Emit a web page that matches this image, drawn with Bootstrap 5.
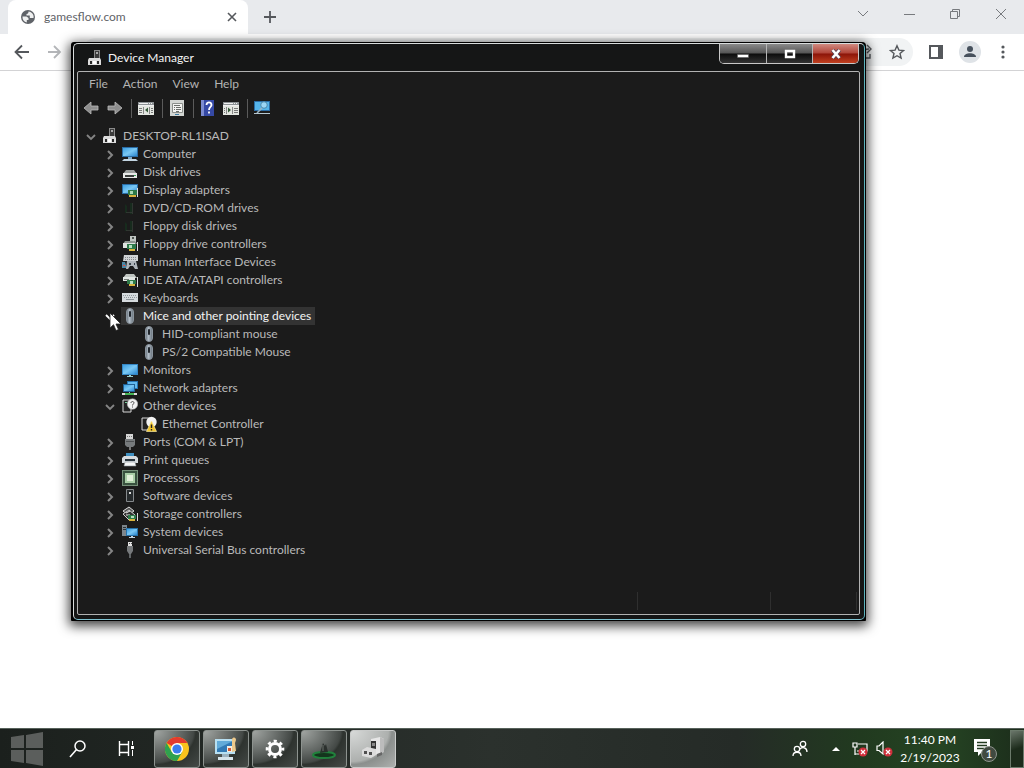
<!DOCTYPE html>
<html lang="en">
<head>
<meta charset="utf-8">
<meta name="viewport" content="width=device-width, initial-scale=1">
<title>Device Manager</title>
<link rel="stylesheet" href="https://cdn.jsdelivr.net/npm/bootstrap@5.3.0/dist/css/bootstrap.min.css">
<style>
body{font-family:Lato,"Open Sans",sans-serif;font-size:12px;line-height:18px;background:#fff}
svg{display:block;flex:none}
button{background:none;border:0;padding:0;color:inherit}
/* browser behind */
.tabstrip{height:34px;background:#e8eaed;padding-left:8px}
.tab{width:240px;background:#fff;border-radius:8px 8px 0 0;color:#5f6368;padding:0 11px 0 12px}
.toolbar-row{height:37px;border-bottom:1px solid #d3d3d5;color:#55585c;padding:0 13px 0 12px}
.omni{height:28px;border-radius:14px;background:#f1f3f4;padding-right:8px;margin:0 16px 0 20px}
.omni input{background:none;border:0;min-width:0;outline:0}
.avatar{width:22px;height:22px;border-radius:50%;background:#dfe3e7;overflow:hidden}
.caption-btns{color:#777a7e;gap:30px;padding-right:17px;padding-bottom:6px}
/* device manager */
.devmgr{left:71px;right:158px;top:42px;bottom:147px;background:#000;border-radius:3px 4px 1px 1px;padding:1px 1px 1px 2px;color:#b9b9b9;box-shadow:0 3px 12px 2px rgba(0,0,0,.75)}
.frame-line{border:1px solid #d8dcdc;border-right-color:#5cb3bd;border-bottom-color:#7fc4d2;border-radius:5px;background:#151616;padding:0 4px 4px 3px}
.titlebar{height:27px;color:#f4f4f4;padding-left:10px}
.title-gap{margin-left:5px}
.client{border:1px solid #b2b2b2;border-radius:2px;background:#1b1b1b}
.winbtns{height:20px;border:1px solid #c8c8c8;border-top:0;border-radius:0 0 5px 5px;overflow:hidden;margin-right:1px}
.winbtns button{width:46px;background:linear-gradient(#8a8a8a,#555 48%,#0c0c0c 52%,#333);display:flex;align-items:center;justify-content:center}
.winbtns button+button{border-left:1px solid #b5b5b5}
.winbtns .shut{background:linear-gradient(#d18a80,#b04438 48%,#8b1408 52%,#c04020)}
.menus{padding:3px 11px 0;gap:15px}
.menus a{color:#b4b4b4;text-decoration:none}
.tools{height:30px;padding-left:5px}
.sep{width:1px;height:19px;background:#5b5b5b;margin:0 6px 0 8px}
.tree{padding:4px 0 0 7px}
.tree ul{padding-left:19px}
.tree .node{height:18px}
.twist{width:12px;height:18px;margin-right:5px;color:#858585;display:flex;align-items:center;justify-content:center;padding-top:1px}
.tree .leaf{padding-left:17px}
.node-label{padding:0 4px 0 1px;height:18px;line-height:18px;white-space:nowrap}
.node-label svg{margin:1px 5px 0 0}
.root-label svg{margin-right:5px}
.picked{background:#333;color:#f4f4f4}
.status{height:22px;padding-right:2px}
.status div{border-right:1px solid #2f2f2f;height:18px}
.pane-b{width:133px}.pane-c{width:86px}
.cursor{left:109px;top:312px}
/* taskbar */
.taskbar{height:40px;background:linear-gradient(90deg,#1b201d,#2b312d 48%,#252b27 72%,#213a1f 84%,#254423 92%,#1c2d1b);border-top:1px solid #56615a;color:#fff}
.apps{gap:3px;padding-left:2px}
.app{width:46px;height:38px;border:1px solid #8d938f;border-radius:3px;background:radial-gradient(ellipse at 0 0,#a2a6a3 0,#5e6360 45%,#434845 62%,#2e332f 66%,#454a47);display:flex;align-items:center;justify-content:center}
.app.live{background:radial-gradient(ellipse at 0 0,#d8dad9 0,#adb0ae 60%,#8b8f8d 66%,#aeb1af);border-color:#c9cbca}
.peek{width:14px;height:38px;border:1px solid #6b7a6b;background:linear-gradient(160deg,#6a766a,#1c2b1b 50%)}
.when{width:56px}
.tray-gap{margin-left:12px}
</style>
</head>
<body class="vh-100 d-flex flex-column overflow-hidden position-relative">
<svg width="0" height="0" class="position-absolute" aria-hidden="true">
<defs>
<linearGradient id="blue" x1="0" y1="0" x2="1" y2="1"><stop offset="0" stop-color="#3c9fe2"/><stop offset=".5" stop-color="#7ac8f4"/><stop offset="1" stop-color="#2b87d0"/></linearGradient>
<linearGradient id="steel" x1="0" x2="1"><stop offset="0" stop-color="#5f6a74"/><stop offset=".4" stop-color="#b5c0ca"/><stop offset="1" stop-color="#667079"/></linearGradient>
<symbol id="i-open" viewBox="0 0 12 12"><path d="M2 4l4 4 4-4" fill="none" stroke="currentColor" stroke-width="1.8"/></symbol>
<symbol id="i-shut" viewBox="0 0 12 12"><path d="M4 2l4 4-4 4" fill="none" stroke="currentColor" stroke-width="2"/></symbol>
<symbol id="i-dev" viewBox="0 0 16 16"><path d="M7 0h6v9H7z" fill="#8a8a8a"/><path d="M8 1h4v8H8z" fill="#3c3c3c"/><path d="M9 2h2v2H9z" fill="#aaa"/><path d="M2 8h11l1 2v5H1v-5z" fill="#dcdcdc"/><path d="M3 11h2v3H3zM10 11h2v3h-2z" fill="#2a2a2a"/><path d="M6 11h3v3H6z" fill="#fff"/></symbol>
<symbol id="i-pc" viewBox="0 0 16 16"><path d="M0 1h16v10H0z" fill="#2a6ca5"/><path d="M1 2h14v8H1z" fill="url(#blue)"/><path d="M6 11h4v2H6z" fill="#7fa9c8"/><path d="M2 13h12l2 2H0z" fill="#c3d5e2"/></symbol>
<symbol id="i-disk" viewBox="0 0 16 16"><path d="M4 6h8l3 4H1z" fill="#9a9e9c"/><path d="M1 9h14v5H1z" fill="#e8eae8"/><path d="M3 11h9v2H3z" fill="#3a3e3c"/><path d="M12 11h2v1h-2z" fill="#3aa35c"/></symbol>
<symbol id="i-disp" viewBox="0 0 16 16"><path d="M0 2h16v10H0z" fill="#2a6ca5"/><path d="M1 3h14v8H1z" fill="url(#blue)"/><path d="M6 8h9v5H6z" fill="#2e7a49"/><path d="M8 9h3v3H8z" fill="#a9d8b4"/><path d="M7 13h7v2H7z" fill="#d7b33c"/><path d="M15 6h1v9h-1z" fill="#ddd"/></symbol>
<symbol id="i-dark" viewBox="0 0 16 16"><path d="M3 4l2 2v7H3zM8 3h2v11H8z" fill="#172b1d"/><path d="M4 12h7v1H4zM10 3h1v11h-1z" fill="#303631"/></symbol>
<symbol id="i-fctl" viewBox="0 0 16 16"><path d="M8 0h6v6H8z" fill="#c0c6c2"/><path d="M10 1h2v2h-2z" fill="#4f5551"/><path d="M3 5h10l2 3H1z" fill="#8c938e"/><path d="M1 7h12v5H1z" fill="#dfe3e0"/><path d="M5 8h9v5H5z" fill="#2e7a49"/><path d="M7 9h3v3H7z" fill="#b5dec0"/><path d="M7 13h6v2H7z" fill="#d7b33c"/><path d="M15 6h1v9h-1z" fill="#ddd"/></symbol>
<symbol id="i-hid" viewBox="0 0 16 16"><path d="M2 1h14v6H1z" fill="#d0d3d5"/><path d="M3 3.500h12M3 5.500h12" stroke="#868b8f" stroke-dasharray="1 1"/><path d="M0 8h3l2 6H0z" fill="#4d87a4"/><path d="M5 7h9l2 8h-3l-2-3H8l-2 3H4z" fill="#aeb4b9"/><path d="M7 9h2v2H7zM12 9h1v2h-1z" fill="#39424a"/><path d="M1 11h2v1H1z" fill="#e64b3c"/></symbol>
<symbol id="i-ide" viewBox="0 0 16 16"><path d="M4 2h8l3 4H1z" fill="#bfc4c0"/><path d="M1 5h12v4H1z" fill="#e2e6e3"/><path d="M2 7h5v1H2z" fill="#767d78"/><path d="M5 8h9v4H5z" fill="#2e7a49"/><path d="M8 9h3v3H8z" fill="#b5dec0"/><path d="M7 12h6v2H7z" fill="#d7b33c"/><path d="M15 5h1v10h-1z" fill="#ddd"/></symbol>
<symbol id="i-key" viewBox="0 0 16 16"><path d="M0 3h16v9H0z" fill="#d5dadd"/><path d="M1 5.500h14M2 7.500h13" stroke="#90989d" stroke-dasharray="1 1"/><path d="M4 9h8v1H4z" fill="#8b9398"/></symbol>
<symbol id="i-mouse" viewBox="0 0 16 16"><rect x="4.500" y=".5" width="7" height="15" rx="3.500" fill="url(#steel)" stroke="#8a949d"/><rect x="7" y="3" width="2" height="6" rx="1" fill="#20262c"/></symbol>
<symbol id="i-mon" viewBox="0 0 16 16"><path d="M0 2h16v11H0z" fill="#3687c4"/><path d="M1 3h14v9H1z" fill="url(#blue)"/><path d="M7 13h2v1h2v1H5v-1h2z" fill="#9cc"/></symbol>
<symbol id="i-net" viewBox="0 0 16 16"><path d="M5 1h11v8H5z" fill="#2674b2"/><path d="M6 2h9v6H6z" fill="#63b9ed"/><path d="M1 4h12v8H1z" fill="#215f92"/><path d="M2 5h10v6H2z" fill="url(#blue)"/><path d="M7 12h1v2H7z" fill="#bbb"/><path d="M0 13h15v2H0z" fill="#46b354"/><path d="M0 13h3v2H0zM12 13h3v2h-3z" fill="#ddd"/></symbol>
<symbol id="i-other" viewBox="0 0 16 16"><path d="M1 2h8v12H1z" fill="#222" stroke="#d7d7d7"/><path d="M3 4h2v1H3z" fill="#7c9"/><circle cx="10.500" cy="6" r="5.200" fill="#f2f2f2" stroke="#b5b5b5" stroke-width=".6"/><path d="M9 5c0-2 3-2 3 0 0 1-1.500 1-1.500 2.500M10.500 8.500v1" fill="none" stroke="#4b4b4b"/></symbol>
<symbol id="i-port" viewBox="0 0 16 16"><path d="M4 0h7v5H4z" fill="#d6d6d6"/><path d="M5 2.500h5" stroke="#777" stroke-dasharray="1 1"/><path d="M3 5h10v6l-2 2H5l-2-2z" fill="#777b7d"/><path d="M4 7.500h8" stroke="#4f5254"/><path d="M7 13h2v3H7z" fill="#777"/></symbol>
<symbol id="i-print" viewBox="0 0 16 16"><path d="M4 1h8v4H4z" fill="#3e8fc0"/><path d="M2 4h12l2 2v5H0V6z" fill="#d5dbdf"/><path d="M3 7h10v2H3z" fill="#27333b"/><path d="M3 10h10l1 4H2z" fill="#f5f7f8" stroke="#8b959b" stroke-width=".6"/></symbol>
<symbol id="i-cpu" viewBox="0 0 16 16"><path d="M0 0h16v16H0z" fill="#39523f"/><path d="M.5.5h15v15H.5z" fill="none" stroke="#b5ccb5" stroke-dasharray="1 1"/><path d="M3 3h10v10H3z" fill="#a9cda6"/><path d="M5 5h6v6H5z" fill="#e2f0da"/></symbol>
<symbol id="i-soft" viewBox="0 0 16 16"><path d="M4.500 1.500h7v12h-7z" fill="#262a2c" stroke="#85898c"/><path d="M7 4h2v2H7z" fill="#ddd"/></symbol>
<symbol id="i-stor" viewBox="0 0 16 16"><path d="M1 5l6-4 5 4-6 4z" fill="#555" stroke="#dadada"/><path d="M1 8l6-4 6 5-6 5z" fill="#333" stroke="#cfcfcf"/><path d="M4 7l4-2M4 9h4" stroke="#eee"/><path d="M6 9h8v4H6z" fill="#2e7a49"/><path d="M9 10h3v2H9z" fill="#b5dec0"/><path d="M7 13h6v2H7z" fill="#d7b33c"/><path d="M15 7h1v8h-1z" fill="#ddd"/></symbol>
<symbol id="i-sys" viewBox="0 0 16 16"><path d="M0 1h5v11H0z" fill="#7d868c"/><path d="M1 3h3v1H1zM1 5h3v1H1z" fill="#2b3338"/><path d="M4 4h12v8H4z" fill="#2772aa"/><path d="M5 5h10v6H5z" fill="url(#blue)"/><path d="M9 12h2v1h2v1H7v-1h2z" fill="#c3d5e2"/></symbol>
<symbol id="i-usb" viewBox="0 0 16 16"><path d="M6 0h4v4H6z" fill="#e3e3e3"/><path d="M7 1h1v1H7zM9 1h1v1H9z" fill="#555"/><path d="M5 4h6v5l-2 3H7L5 9z" fill="#76797b"/><path d="M7 12h2v4H7z" fill="#606466"/></symbol>
</defs>
</svg>

<header>
  <div class="tabstrip d-flex justify-content-between">
    <div class="d-flex">
      <div class="tab d-flex align-items-center">
        <svg width="16" height="16" viewBox="0 0 16 16"><circle cx="8" cy="8" r="7" fill="#5f6368"/><path d="M2.500 7.500h4l2 1.500v2H6.800v2.600C4 13 2.300 10.500 2.500 7.500zM8.500 2.500c0 1.500-.5 2.500-2 2.500v1.500h3.300V9h3.700c.8-3-1.500-6.200-5-6.500z" fill="#fff" opacity=".9"/></svg>
        <span class="ms-2 flex-grow-1">gamesflow.com</span>
        <button aria-label="Close tab"><svg width="10" height="10" viewBox="0 0 10 10"><path d="M1 1l8 8M9 1L1 9" stroke="#55585c" stroke-width="1.600"/></svg></button>
      </div>
      <button class="ms-3" aria-label="New tab"><svg width="12" height="12" viewBox="0 0 12 12"><path d="M6 0v12M0 6h12" stroke="#55585c" stroke-width="1.800"/></svg></button>
    </div>
    <div class="caption-btns d-flex align-items-center">
      <button class="me-1" aria-label="Search tabs"><svg width="12" height="12" viewBox="0 0 12 12"><path d="M1 3l5 5 5-5" fill="none" stroke="currentColor"/></svg></button>
      <button aria-label="Minimize browser"><svg width="12" height="12" viewBox="0 0 12 12"><path d="M1 6.500h11" stroke="currentColor"/></svg></button>
      <button class="ms-1" aria-label="Restore browser"><svg width="12" height="12" viewBox="0 0 12 12"><path d="M1.500 3.500h7v7h-7zM3.500 3V1.500h7v7H9" fill="none" stroke="currentColor"/></svg></button>
      <button class="ms-1" aria-label="Close browser"><svg width="12" height="12" viewBox="0 0 12 12"><path d="M1 1l10 10M11 1L1 11" stroke="currentColor"/></svg></button>
    </div>
  </div>
  <div class="toolbar-row d-flex align-items-center">
    <button aria-label="Back"><svg width="20" height="16" viewBox="0 0 20 16"><path d="M17 8H4M10 1.500L3.500 8l6.500 6.500" fill="none" stroke="currentColor" stroke-width="1.800"/></svg></button>
    <button class="ms-3" aria-label="Forward" disabled><svg width="14" height="16" viewBox="0 0 14 16"><path d="M0 8h12M6 2l6 6-6 6" fill="none" stroke="#b4b6b9" stroke-width="1.800"/></svg></button>
    <div class="omni d-flex align-items-center flex-grow-1">
      <input class="flex-grow-1" type="text" aria-label="Address">
      <button class="me-3" aria-label="Share"><svg width="16" height="16" viewBox="0 0 16 16"><path d="M5 6H2v8h11v-4M6 10c0-4 3-5 6-5M10 1l4 4-4 4" fill="none" stroke="currentColor" stroke-width="1.400"/></svg></button>
      <button aria-label="Bookmark"><svg width="16" height="16" viewBox="0 0 16 16"><path d="M8 1.800l1.900 4.300 4.600.4-3.500 3 1.100 4.600L8 11.700l-4.100 2.400L5 9.500l-3.500-3 4.600-.4z" fill="none" stroke="currentColor" stroke-width="1.400"/></svg></button>
    </div>
    <button aria-label="Side panel"><svg width="14" height="14" viewBox="0 0 14 14"><path d="M1 1h12v12H1z" fill="#fff" stroke="currentColor" stroke-width="2"/><path d="M9 1h4v12H9z" fill="currentColor"/></svg></button>
    <button class="avatar ms-3 me-3" aria-label="Profile"><svg width="22" height="22" viewBox="0 0 22 22"><circle cx="11" cy="8" r="3" fill="#47515d"/><path d="M5 16c0-5 12-5 12 0z" fill="#47515d"/></svg></button>
    <button aria-label="Menu"><svg width="14" height="16" viewBox="0 0 14 16"><g fill="currentColor"><circle cx="6" cy="3" r="1.600"/><circle cx="6" cy="8" r="1.600"/><circle cx="6" cy="13" r="1.600"/></g></svg></button>
  </div>
</header>
<main class="flex-grow-1"></main>

<section class="devmgr position-absolute d-flex" aria-label="Device Manager">
  <div class="frame-line flex-grow-1 d-flex flex-column">
    <div class="titlebar d-flex justify-content-between">
      <div class="d-flex align-items-center"><svg width="16" height="16"><use href="#i-dev"/></svg><span class="title-gap">Device Manager</span></div>
      <div class="winbtns d-flex">
        <button aria-label="Minimize"><svg width="12" height="10" viewBox="0 0 12 10"><path d="M.5 5.500h11v3H.5z" fill="#fff" stroke="#555" stroke-width=".5"/></svg></button>
        <button aria-label="Maximize"><svg width="12" height="10" viewBox="0 0 12 10"><path d="M2 2h8v6H2z" fill="none" stroke="#fff" stroke-width="2.400"/></svg></button>
        <button class="shut" aria-label="Close"><svg width="12" height="10" viewBox="0 0 12 10"><path d="M2.500 1l7 8M9.500 1l-7 8" stroke="#545" stroke-width="4"/><path d="M2.500 1l7 8M9.500 1l-7 8" stroke="#fff" stroke-width="2.600"/></svg></button>
      </div>
    </div>
    <div class="client flex-grow-1 d-flex flex-column">
      <nav class="menus d-flex"><a href="#">File</a><a href="#">Action</a><a href="#">View</a><a href="#">Help</a></nav>
      <div class="tools d-flex align-items-center">
        <button aria-label="Back"><svg width="16" height="14" viewBox="0 0 16 14"><path d="M1 7l7-6v4h7v4H8v4z" fill="#8e8e8e" stroke="#bdbdbd" stroke-width=".8"/></svg></button>
        <button class="ms-2" aria-label="Forward"><svg width="16" height="14" viewBox="0 0 16 14"><path d="M15 7L8 1v4H1v4h7v4z" fill="#8e8e8e" stroke="#bdbdbd" stroke-width=".8"/></svg></button>
        <span class="sep"></span>
        <button aria-label="Show console tree"><svg width="16" height="16" viewBox="0 0 16 16"><path d="M0 2h16v13H0z" fill="#e4e7e2"/><path d="M0 2h16v4H0z" fill="#8d9295"/><path d="M1 3h9v1H1zM11 3h1v1h-1zM13 3h1v1h-1zM0 5h16v1H0z" fill="#f0f0f0"/><path d="M5 7h1v7H5zM11 7h1v7h-1z" fill="#888"/><path d="M1 8.500h3M1 10.500h3M1 12.500h3M13 8.500h2M13 10.500h2M13 12.500h2" stroke="#777"/><path d="M10 7.500v5L7 10z" fill="#345a38"/></svg></button>
        <span class="sep"></span>
        <button aria-label="Properties"><svg width="16" height="16" viewBox="0 0 16 16"><path d="M1 0h14v16H1z" fill="#d3d6d3"/><path d="M3.500 3.500h10v9h-10z" fill="#f4f4f2" stroke="#8b8f8b"/><path d="M5 5.500h6M7 7.500h5M7 9.500h5M7 11.500h3M5 7.500h1M5 9.500h1" stroke="#6a6e6a"/><path d="M6 14h4v1H6z" fill="#3f7ba0"/></svg></button>
        <span class="sep"></span>
        <button aria-label="Help"><svg width="15" height="16" viewBox="0 0 15 16"><path d="M1 0h13v16H1z" fill="#3549a5"/><path d="M1 0h3v16H1z" fill="#7c8bd0"/><path d="M6.500 5c0-3.500 5-3.500 5 0 0 2-2.500 2-2.500 5M9 11.500v2" fill="none" stroke="#fff" stroke-width="1.800"/></svg></button>
        <button class="ms-2" aria-label="Show action pane"><svg width="16" height="16" viewBox="0 0 16 16"><path d="M0 2h16v13H0z" fill="#e4e7e2"/><path d="M0 2h16v4H0z" fill="#8d9295"/><path d="M1 3h9v1H1zM11 3h1v1h-1zM13 3h1v1h-1zM0 5h16v1H0z" fill="#f0f0f0"/><path d="M3 7h1v7H3zM9 7h1v7H9z" fill="#888"/><path d="M1 8.500h1M1 10.500h1M1 12.500h1M11 8.500h4M11 10.500h4M11 12.500h4" stroke="#777"/><path d="M5 7.500v5L8 10z" fill="#345a38"/></svg></button>
        <span class="sep"></span>
        <button aria-label="Scan for hardware changes"><svg width="16" height="16" viewBox="0 0 16 16"><path d="M0 1h16v10H0z" fill="#2a6ca5"/><path d="M1 2h14v8H1z" fill="#55b4ea"/><circle cx="10" cy="5" r="3.300" fill="#9bd5f4" stroke="#4b88ac"/><path d="M8 8l-5 5" stroke="#98b3c2" stroke-width="1.600"/><path d="M0 13h16v1H0z" fill="#b5c6d0"/></svg></button>
      </div>
      <div class="tree flex-grow-1">
        <div class="node d-flex align-items-center"><button class="twist" aria-label="Collapse"><svg width="12" height="12"><use href="#i-open"/></svg></button><span class="root-label d-flex align-items-center"><svg width="16" height="16"><use href="#i-dev"/></svg>DESKTOP-RL1ISAD</span></div>
        <ul class="list-unstyled mb-0">
          <li class="node d-flex"><button class="twist" aria-label="Expand"><svg width="12" height="12"><use href="#i-shut"/></svg></button><span class="node-label d-flex"><svg width="16" height="16"><use href="#i-pc"/></svg>Computer</span></li>
          <li class="node d-flex"><button class="twist" aria-label="Expand"><svg width="12" height="12"><use href="#i-shut"/></svg></button><span class="node-label d-flex"><svg width="16" height="16"><use href="#i-disk"/></svg>Disk drives</span></li>
          <li class="node d-flex"><button class="twist" aria-label="Expand"><svg width="12" height="12"><use href="#i-shut"/></svg></button><span class="node-label d-flex"><svg width="16" height="16"><use href="#i-disp"/></svg>Display adapters</span></li>
          <li class="node d-flex"><button class="twist" aria-label="Expand"><svg width="12" height="12"><use href="#i-shut"/></svg></button><span class="node-label d-flex"><svg width="16" height="16"><use href="#i-dark"/></svg>DVD/CD-ROM drives</span></li>
          <li class="node d-flex"><button class="twist" aria-label="Expand"><svg width="12" height="12"><use href="#i-shut"/></svg></button><span class="node-label d-flex"><svg width="16" height="16"><use href="#i-dark"/></svg>Floppy disk drives</span></li>
          <li class="node d-flex"><button class="twist" aria-label="Expand"><svg width="12" height="12"><use href="#i-shut"/></svg></button><span class="node-label d-flex"><svg width="16" height="16"><use href="#i-fctl"/></svg>Floppy drive controllers</span></li>
          <li class="node d-flex"><button class="twist" aria-label="Expand"><svg width="12" height="12"><use href="#i-shut"/></svg></button><span class="node-label d-flex"><svg width="16" height="16"><use href="#i-hid"/></svg>Human Interface Devices</span></li>
          <li class="node d-flex"><button class="twist" aria-label="Expand"><svg width="12" height="12"><use href="#i-shut"/></svg></button><span class="node-label d-flex"><svg width="16" height="16"><use href="#i-ide"/></svg>IDE ATA/ATAPI controllers</span></li>
          <li class="node d-flex"><button class="twist" aria-label="Expand"><svg width="12" height="12"><use href="#i-shut"/></svg></button><span class="node-label d-flex"><svg width="16" height="16"><use href="#i-key"/></svg>Keyboards</span></li>
          <li>
            <div class="node d-flex"><button class="twist text-white" aria-label="Collapse"><svg width="12" height="12"><use href="#i-open"/></svg></button><span class="node-label picked d-flex"><svg width="16" height="16"><use href="#i-mouse"/></svg>Mice and other pointing devices</span></div>
            <ul class="list-unstyled">
              <li class="node leaf d-flex"><span class="node-label d-flex"><svg width="16" height="16"><use href="#i-mouse"/></svg>HID-compliant mouse</span></li>
              <li class="node leaf d-flex"><span class="node-label d-flex"><svg width="16" height="16"><use href="#i-mouse"/></svg>PS/2 Compatible Mouse</span></li>
            </ul>
          </li>
          <li class="node d-flex"><button class="twist" aria-label="Expand"><svg width="12" height="12"><use href="#i-shut"/></svg></button><span class="node-label d-flex"><svg width="16" height="16"><use href="#i-mon"/></svg>Monitors</span></li>
          <li class="node d-flex"><button class="twist" aria-label="Expand"><svg width="12" height="12"><use href="#i-shut"/></svg></button><span class="node-label d-flex"><svg width="16" height="16"><use href="#i-net"/></svg>Network adapters</span></li>
          <li>
            <div class="node d-flex"><button class="twist" aria-label="Collapse"><svg width="12" height="12"><use href="#i-open"/></svg></button><span class="node-label d-flex"><svg width="16" height="16"><use href="#i-other"/></svg>Other devices</span></div>
            <ul class="list-unstyled">
              <li class="node leaf d-flex"><span class="node-label d-flex"><svg width="16" height="16" viewBox="0 0 16 16"><path d="M1 2h8v12H1z" fill="#222" stroke="#d7d7d7"/><circle cx="10.500" cy="6" r="5.200" fill="#f2f2f2"/><path d="M10.500 5l5 10.500h-10z" fill="#f3c62f" stroke="#f8e9a0" stroke-width=".7"/><path d="M10.500 8.500V12M10.500 13v1.400" stroke="#222" stroke-width="1.400"/></svg>Ethernet Controller</span></li>
            </ul>
          </li>
          <li class="node d-flex"><button class="twist" aria-label="Expand"><svg width="12" height="12"><use href="#i-shut"/></svg></button><span class="node-label d-flex"><svg width="16" height="16"><use href="#i-port"/></svg>Ports (COM &amp; LPT)</span></li>
          <li class="node d-flex"><button class="twist" aria-label="Expand"><svg width="12" height="12"><use href="#i-shut"/></svg></button><span class="node-label d-flex"><svg width="16" height="16"><use href="#i-print"/></svg>Print queues</span></li>
          <li class="node d-flex"><button class="twist" aria-label="Expand"><svg width="12" height="12"><use href="#i-shut"/></svg></button><span class="node-label d-flex"><svg width="16" height="16"><use href="#i-cpu"/></svg>Processors</span></li>
          <li class="node d-flex"><button class="twist" aria-label="Expand"><svg width="12" height="12"><use href="#i-shut"/></svg></button><span class="node-label d-flex"><svg width="16" height="16"><use href="#i-soft"/></svg>Software devices</span></li>
          <li class="node d-flex"><button class="twist" aria-label="Expand"><svg width="12" height="12"><use href="#i-shut"/></svg></button><span class="node-label d-flex"><svg width="16" height="16"><use href="#i-stor"/></svg>Storage controllers</span></li>
          <li class="node d-flex"><button class="twist" aria-label="Expand"><svg width="12" height="12"><use href="#i-shut"/></svg></button><span class="node-label d-flex"><svg width="16" height="16"><use href="#i-sys"/></svg>System devices</span></li>
          <li class="node d-flex"><button class="twist" aria-label="Expand"><svg width="12" height="12"><use href="#i-shut"/></svg></button><span class="node-label d-flex"><svg width="16" height="16"><use href="#i-usb"/></svg>Universal Serial Bus controllers</span></li>
        </ul>
      </div>
      <div class="status d-flex"><div class="flex-grow-1"></div><div class="pane-b"></div><div class="pane-c"></div></div>
    </div>
  </div>
</section>
<svg class="cursor position-absolute" width="13" height="20" viewBox="0 0 13 20" aria-hidden="true"><path d="M1 1v15l3.500-3.300L7 18.500l2.500-1L7 12h5z" fill="#fff" stroke="#222" stroke-width=".8"/></svg>

<footer class="taskbar d-flex align-items-center justify-content-between">
  <div class="d-flex align-items-center">
    <button class="ms-2 me-4" aria-label="Start"><svg width="36" height="34" viewBox="0 0 36 34"><path d="M3 5l13-2v13H3zM18 3l17-3v16H18zM3 18h13v13L3 29zM18 18h17v16l-17-3z" fill="#5b5e5c"/></svg></button>
    <button class="me-4" aria-label="Search"><svg width="20" height="20" viewBox="0 0 20 20"><circle cx="12" cy="7" r="5" fill="none" stroke="#fff" stroke-width="1.500"/><path d="M8.500 10.500L2 18" stroke="#fff" stroke-width="1.600"/></svg></button>
    <button class="ms-1 me-3" aria-label="Task view"><svg width="20" height="18" viewBox="0 0 20 18"><path d="M3.500 4.500h9v8h-9zM3.500 4V1M12.500 4V1M3.500 13v3M12.500 13v3" fill="none" stroke="#fff" stroke-width="1.400"/><path d="M16.500 1v4M16.500 10v6" stroke="#fff"/><path d="M15 6h3v3h-3z" fill="#fff"/></svg></button>
    <div class="apps d-flex">
      <button class="app" aria-label="Chrome"><svg width="24" height="24" viewBox="0 0 24 24"><circle cx="12" cy="12" r="12" fill="#f9c31c"/><path d="M12 12L1.600 6A12 12 0 0 1 22.400 6H12z" fill="#e33b2e"/><path d="M1.600 6A12 12 0 0 0 12 24l5.200-9L12 12 6.800 15z" fill="#2fa14f"/><circle cx="12" cy="12" r="6" fill="#fff"/><circle cx="12" cy="12" r="4.600" fill="#3b7ded"/></svg></button>
      <button class="app" aria-label="Remote desktop"><svg width="26" height="26" viewBox="0 0 26 26"><path d="M2 3h20v15H2z" fill="#b7dff1"/><path d="M4 5h16v11H4z" fill="#327ab5"/><path d="M4 5h16L4 13z" fill="#62abd9"/><path d="M9 18h7v3H9z" fill="#9cb2c0"/><path d="M5 21h15v3H5z" fill="#d6e3ea"/><path d="M14 10h6v6h-6z" fill="#f2eee6"/><path d="M15 12h3v3h-3z" fill="#d65830"/><path d="M19 3c2-3 4-1 4 1l-1 3 1 8-4 1z" fill="#ecc98c"/></svg></button>
      <button class="app" aria-label="Settings"><svg width="20" height="20" viewBox="0 0 20 20"><circle cx="10" cy="10" r="5.500" fill="none" stroke="#fff" stroke-width="3"/><circle cx="10" cy="10" r="8" fill="none" stroke="#fff" stroke-width="2.600" stroke-dasharray="3.140 3.140" stroke-dashoffset="1.570"/></svg></button>
      <button class="app" aria-label="Utility"><svg width="26" height="26" viewBox="0 0 26 26"><ellipse cx="13" cy="19" rx="11" ry="3" fill="#14351d" stroke="#21813c" stroke-width="2"/><path d="M9 17l3-10 2 3 1-2 2 8z" fill="#2b302d"/><path d="M12 9v6" stroke="#6a706c"/></svg></button>
      <button class="app live" aria-label="Device Manager"><svg width="26" height="26" viewBox="0 0 26 26"><path d="M11 3l9-2 4 2v13l-9 3-4-3z" fill="#e6e6e6"/><path d="M20 1l4 2v13l-4 1z" fill="#bcbcbc"/><path d="M11 5h5v9h-5z" fill="#333"/><path d="M12 7h3v3h-3z" fill="#888"/><path d="M2 14l5-3 9 2v6l-5 3-9-2z" fill="#dcdcdc"/><path d="M4 15h3v3H4zM9 16h3v3H9z" fill="#505050"/><path d="M17 18l5-2v3l-5 2z" fill="#666"/></svg></button>
    </div>
  </div>
  <div class="d-flex align-items-center">
    <button aria-label="People"><svg width="16" height="18" viewBox="0 0 16 18"><g fill="none" stroke="#fff" stroke-width="1.300"><circle cx="11" cy="4" r="2.700"/><circle cx="5" cy="9" r="2.700"/><path d="M1 16c0-5 8-5 8 0M8 9c2-2 7-2 7 3"/></g></svg></button>
    <button class="ms-4" aria-label="Show hidden icons"><svg width="8" height="5" viewBox="0 0 8 5"><path d="M0 5l4-4 4 4z" fill="#fff"/></svg></button>
    <button class="tray-gap me-2" aria-label="Network"><svg width="16" height="16" viewBox="0 0 16 16"><path d="M1 2h4v4H1zM3 6v8M3 13h4M6 3h9v7H5" fill="none" stroke="#fff" stroke-width="1.200"/><circle cx="11" cy="11" r="4.500" fill="#d0303c"/><path d="M9 9l4 4M13 9l-4 4" stroke="#fff" stroke-width="1.200"/></svg></button>
    <button class="me-2" aria-label="Volume"><svg width="18" height="16" viewBox="0 0 18 16"><path d="M1 5h2l4-4v12L3 9.500H1z" fill="none" stroke="#fff" stroke-width="1.200"/><circle cx="12" cy="11" r="4.500" fill="#d0303c"/><path d="M10 9l4 4M14 9l-4 4" stroke="#fff" stroke-width="1.200"/></svg></button>
    <div class="when text-nowrap d-flex flex-column align-items-center"><span>11:40 PM</span><span>2/19/2023</span></div>
    <button class="ms-3" aria-label="Notifications"><svg width="28" height="26" viewBox="0 0 28 26"><path d="M0 3h16v13H8l-4 4v-4H0z" fill="#fff"/><path d="M3 6.500h10M3 9.500h10M3 12.500h7" stroke="#243c22" stroke-width="1.400"/><circle cx="15" cy="18" r="7.500" fill="#414a40" stroke="#8f958e"/><text x="15" y="22" text-anchor="middle" fill="#fff" font-size="12">1</text></svg></button>
    <button class="peek ms-2" aria-label="Show desktop"></button>
  </div>
</footer>
<script src="https://cdn.jsdelivr.net/npm/bootstrap@5.3.0/dist/js/bootstrap.bundle.min.js"></script>
</body>
</html>
